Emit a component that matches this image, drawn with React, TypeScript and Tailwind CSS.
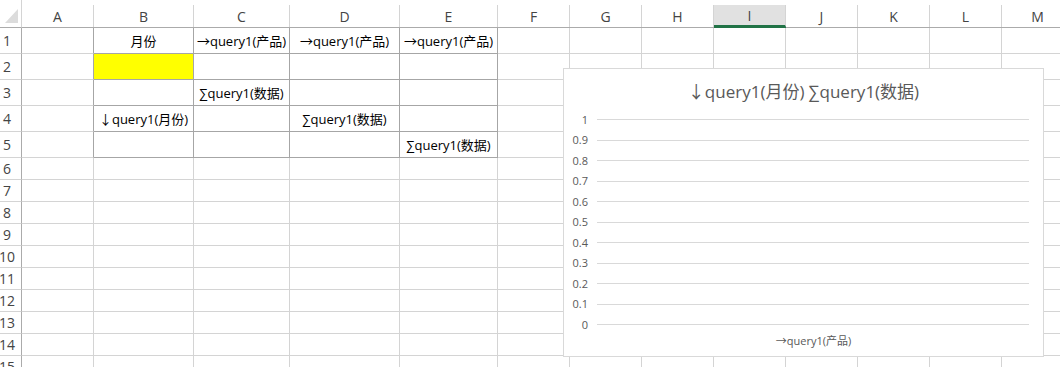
import React from 'react';

const cols = [
  { l: 'A', w: 72 },
  { l: 'B', w: 100 },
  { l: 'C', w: 96 },
  { l: 'D', w: 110 },
  { l: 'E', w: 98 },
  { l: 'F', w: 72 },
  { l: 'G', w: 72 },
  { l: 'H', w: 72 },
  { l: 'I', w: 72 },
  { l: 'J', w: 72 },
  { l: 'K', w: 72 },
  { l: 'L', w: 72 },
  { l: 'M', w: 72 },
];

const rowHeights = [26, 26, 26, 26, 26, 22, 22, 22, 22, 22, 22, 22, 22, 22, 22];

// cell contents keyed by "col-row"
const cells: Record<string, string> = {
  'B-1': '月份',
  'C-1': '→query1(产品)',
  'D-1': '→query1(产品)',
  'E-1': '→query1(产品)',
  'C-3': '∑query1(数据)',
  'B-4': '↓query1(月份)',
  'D-4': '∑query1(数据)',
  'E-5': '∑query1(数据)',
};

const font = { fontFamily: '"Open Sans", "Noto Sans CJK SC", sans-serif' };
const ticks = ['1', '0.9', '0.8', '0.7', '0.6', '0.5', '0.4', '0.3', '0.2', '0.1', '0'];

const Chart: React.FC = () => (
  <div className="absolute left-[563px] top-[68px] flex h-[289px] w-[481px] flex-col border border-[#d9d9d9] bg-white text-[#595959]">
    <div className="flex h-[34px] items-end justify-center text-[17px] leading-[22px]">
      ↓query1(月份) ∑query1(数据)
    </div>
    <div className="mt-[16px] flex h-[206px] flex-col justify-between pr-[14px]">
      {ticks.map((t) => (
        <div key={t} className="flex h-px items-center">
          <div className="w-[24px] shrink-0 text-right text-[11px] leading-[14px]">{t}</div>
          <div className="ml-[9px] h-px flex-1 bg-[#d9d9d9]"></div>
        </div>
      ))}
    </div>
    <div className="mt-[9px] pl-[34px] pr-[14px] text-center text-[11px] leading-[14px]">→query1(产品)</div>
  </div>
);

export default function App() {
  return (
    <div className="relative h-[367px] w-[1060px] overflow-hidden bg-white text-[13px] text-black" style={font}>
      {/* column headers */}
      <div className="flex h-[28px]">
        <div className="flex h-[28px] w-[22px] shrink-0 border-r border-b border-[#ababab] border-r-[#d4d4d4]">
          <svg width="21" height="27" className="block">
            <polygon points="18,9 18,23 5,23" fill="#dcdcdc" />
          </svg>
        </div>
        {cols.map((c) => (
          <div
            key={c.l}
            style={{ width: c.w }}
            className={`flex h-[28px] shrink-0 flex-col border-b ${c.l === 'I' ? 'border-[#217346]' : 'border-[#ababab]'}`}
          >
            <div
              className={`mt-[5px] flex h-[22px] items-center justify-center border-r border-[#d4d4d4] text-[14px] text-[#444] ${
                c.l === 'I' ? 'border-b-2 border-b-[#217346] bg-[#e1e1e1]' : ''
              }`}
            >
              {c.l}
            </div>
          </div>
        ))}
      </div>

      {/* rows */}
      {rowHeights.map((h, ri) => {
        const r = ri + 1;
        const inTable = r <= 5;
        return (
          <div key={r} className="flex" style={{ height: h }}>
            <div className="flex w-[22px] shrink-0 border-r border-b border-[#ababab] border-b-[#d4d4d4]">
              <div className="flex w-[14px] items-center justify-center text-[14px] text-[#444]">{r}</div>
            </div>
            {cols.map((c, ci) => {
              const darkRight = inTable && ci <= 4;
              const darkBottom = inTable && ci >= 1 && ci <= 4;
              const text = cells[`${c.l}-${r}`];
              const yellow = c.l === 'B' && r === 2;
              return (
                <div
                  key={c.l}
                  style={{ width: c.w }}
                  className={`flex shrink-0 items-center justify-center overflow-visible whitespace-nowrap border-r border-b pt-[2px] ${
                    darkRight ? 'border-r-[#a6a6a6]' : 'border-r-[#d4d4d4]'
                  } ${darkBottom ? 'border-b-[#a6a6a6]' : 'border-b-[#d4d4d4]'} ${yellow ? 'bg-[#ffff00]' : ''}`}
                >
                  {text}
                </div>
              );
            })}
          </div>
        );
      })}

      <Chart />
    </div>
  );
}
